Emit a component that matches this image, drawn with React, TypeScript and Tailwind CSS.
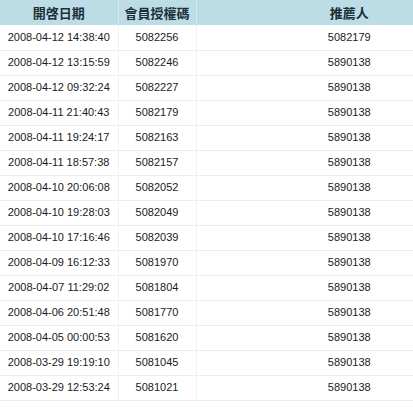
const rows: [string, string, string][] = [
  ['2008-04-12 14:38:40', '5082256', '5082179'],
  ['2008-04-12 13:15:59', '5082246', '5890138'],
  ['2008-04-12 09:32:24', '5082227', '5890138'],
  ['2008-04-11 21:40:43', '5082179', '5890138'],
  ['2008-04-11 19:24:17', '5082163', '5890138'],
  ['2008-04-11 18:57:38', '5082157', '5890138'],
  ['2008-04-10 20:06:08', '5082052', '5890138'],
  ['2008-04-10 19:28:03', '5082049', '5890138'],
  ['2008-04-10 17:16:46', '5082039', '5890138'],
  ['2008-04-09 16:12:33', '5081970', '5890138'],
  ['2008-04-07 11:29:02', '5081804', '5890138'],
  ['2008-04-06 20:51:48', '5081770', '5890138'],
  ['2008-04-05 00:00:53', '5081620', '5890138'],
  ['2008-03-29 19:19:10', '5081045', '5890138'],
  ['2008-03-29 12:53:24', '5081021', '5890138'],
];

export default function App() {
  return (
    <div className="w-[413px] h-[408px] overflow-hidden bg-white">
      <table className="w-[502px] table-fixed border-collapse text-center">
        <colgroup>
          <col className="w-[118px]" />
          <col className="w-[78px]" />
          <col className="w-[306px]" />
        </colgroup>
        <thead>
          <tr className="h-[25px] bg-[#bcdde6] border-b border-white">
            {['開啓日期', '會員授權碼', '推薦人'].map((h, i) => (
              <th
                key={h}
                className={`p-0 text-[13px] font-bold text-[#1c2f38] font-['Noto_Sans_CJK_TC',sans-serif] ${i < 2 ? 'border-r border-[#d4eaf0]' : ''}`}
              >
                {h}
              </th>
            ))}
          </tr>
        </thead>
        <tbody className="font-['Liberation_Sans',sans-serif] text-[11px] text-[#1a1a1a]">
          {rows.map((r) => (
            <tr key={r[0]} className="h-[25px] border-b border-[#eaf0f2]">
              <td className="p-0 border-r border-[#edf2f4]">{r[0]}</td>
              <td className="p-0 border-r border-[#edf2f4]">{r[1]}</td>
              <td className="p-0">{r[2]}</td>
            </tr>
          ))}
        </tbody>
      </table>
    </div>
  );
}
